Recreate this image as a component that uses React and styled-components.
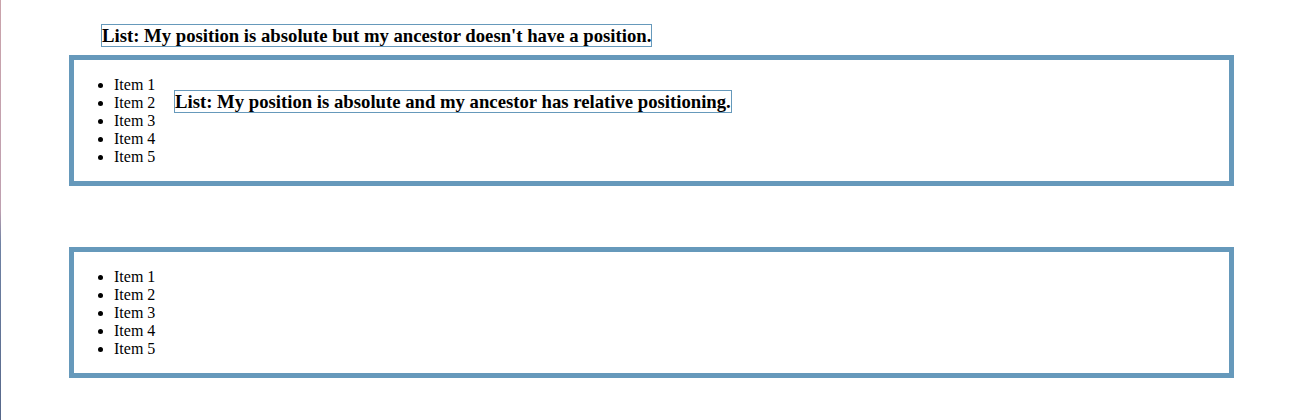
import { createGlobalStyle, styled } from 'styled-components';

const GlobalStyle = createGlobalStyle`
    html {
        background: #fff linear-gradient(to bottom, #caa3ab 0%, #bfa0b0 50%, #6f82a4 58%, #56678a 100%) no-repeat;
        background-size: 1px 100%;
        min-height: 100%;
    }
    body {
        margin: 8px;
        font-family: "Liberation Serif", "Times New Roman", serif;
        font-size: 16px;
        color: #000;
    }
`;

const Page = styled.div`
    display: flex;
    flex-direction: column;
    gap: 61px;
    padding-top: 47px;
`;

// box around each list, the first one is the positioned ancestor
const Panel = styled.div`
    position: ${(p) => (p.$relative ? 'relative' : 'static')};
    height: 121px;
    margin: 0 60px 0 61px;
    border: 5px solid #6699bb;
`;

const List = styled.ul`
    margin: 16px 0;
    padding-left: 40px;
    line-height: 18px;
`;

const Caption = styled.h3`
    position: absolute;
    top: ${(p) => p.$top}px;
    left: ${(p) => p.$left}px;
    margin: 0;
    border: 1px solid #6699bb;
    font-size: 18.72px;
    line-height: 21px;
    font-weight: bold;
    white-space: nowrap;
`;

const items = ['Item 1', 'Item 2', 'Item 3', 'Item 4', 'Item 5'];

export default function App() {
    return (
        <>
            <GlobalStyle />
            <Page>
                <Panel $relative>
                    <List>
                        {items.map((item) => (
                            <li key={item}>{item}</li>
                        ))}
                    </List>
                    <Caption $top={30} $left={100}>
                        List: My position is absolute and my ancestor has relative positioning.
                    </Caption>
                </Panel>
                <Panel>
                    <List>
                        {items.map((item) => (
                            <li key={item}>{item}</li>
                        ))}
                    </List>
                    <Caption $top={24} $left={101}>
                        List: My position is absolute but my ancestor doesn't have a position.
                    </Caption>
                </Panel>
            </Page>
        </>
    );
}
